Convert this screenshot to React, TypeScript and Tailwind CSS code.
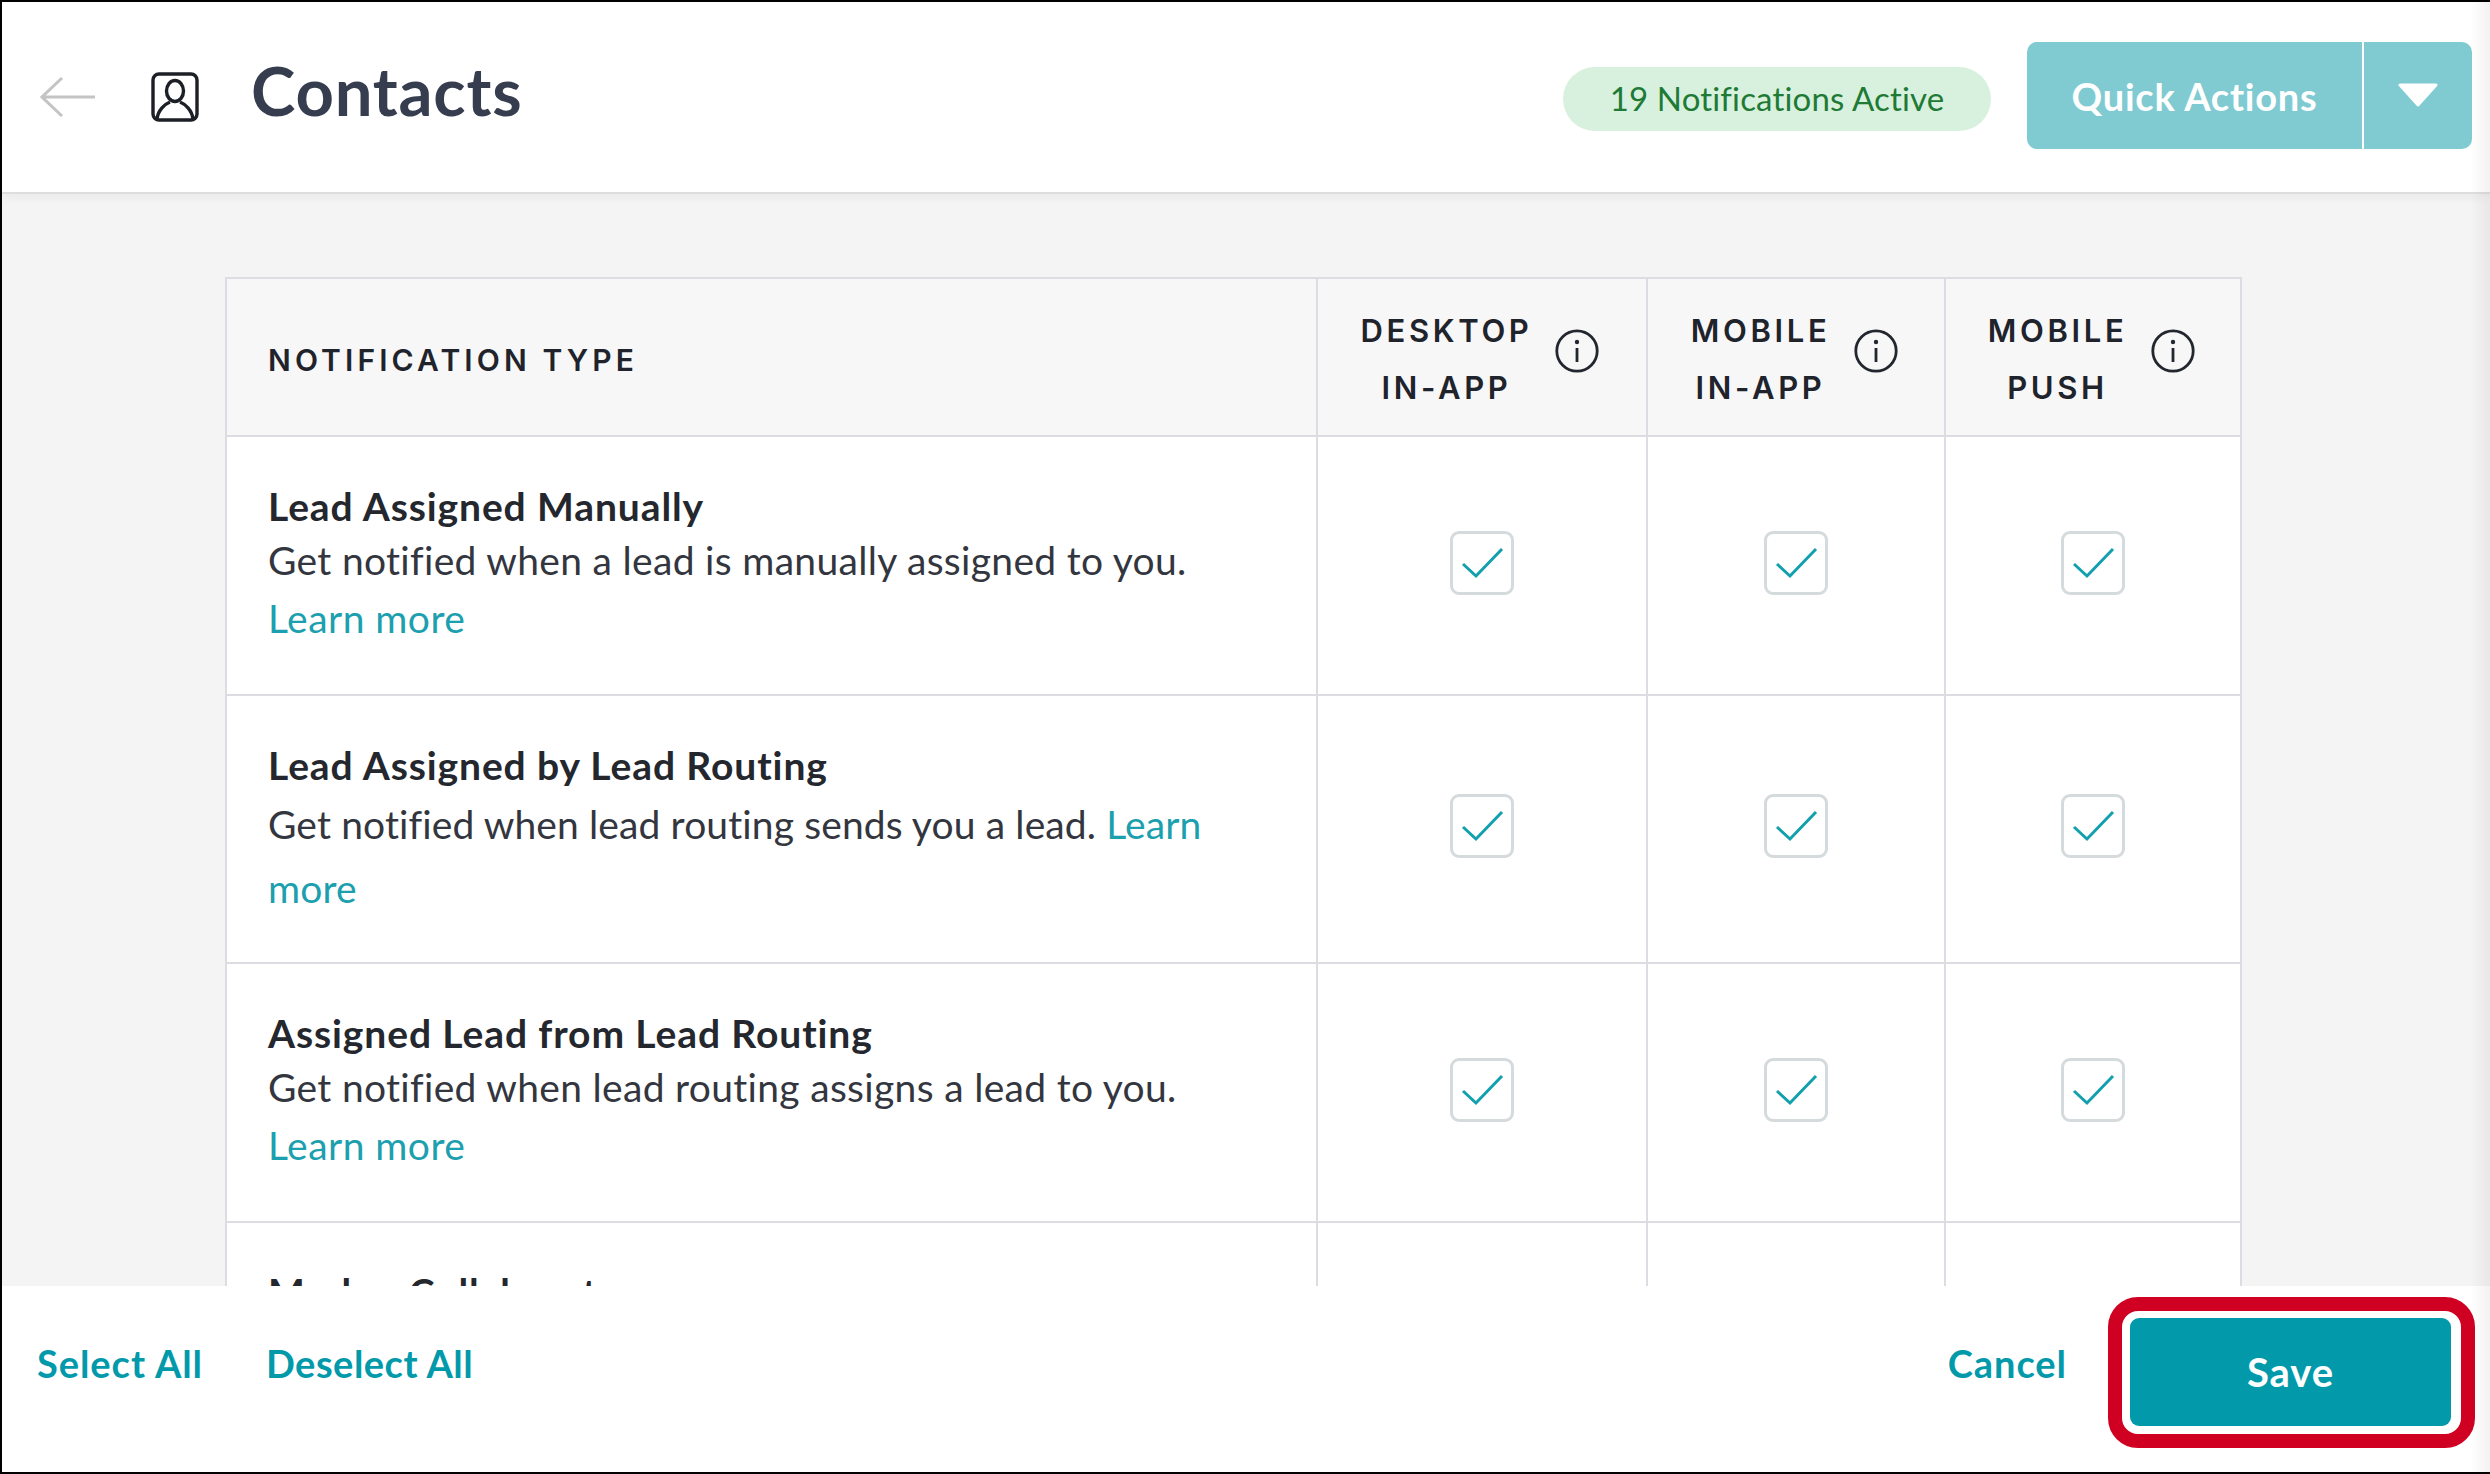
const font = "font-['Lato','Liberation_Sans',sans-serif]";

const rows = [
  { title: "Lead Assigned Manually", desc: "Get notified when a lead is manually assigned to you.", inline: false, h: "h-[259px]" },
  { title: "Lead Assigned by Lead Routing", desc: "Get notified when lead routing sends you a lead.", inline: true, h: "h-[268px]" },
  { title: "Assigned Lead from Lead Routing", desc: "Get notified when lead routing assigns a lead to you.", inline: false, h: "h-[259px]" },
  { title: "Marker Collaborator", desc: "", inline: false, h: "h-[259px]" },
];

const grid = "grid grid-cols-[1089px_330px_298px_296px]";

function InfoIcon() {
  return (
    <svg viewBox="0 0 44 44" className="h-11 w-11 shrink-0" fill="none">
      <circle cx="22" cy="22" r="20.2" stroke="#22262e" strokeWidth="2.8" />
      <circle cx="22" cy="13" r="2.2" fill="#22262e" />
      <path d="M22 19v14" stroke="#22262e" strokeWidth="2.8" />
    </svg>
  );
}

function Check() {
  return (
    <div className="flex h-16 w-16 items-center justify-center rounded-[9px] border-[3px] border-[#d5dadd] bg-white">
      <svg viewBox="0 0 58 58" className="h-[58px] w-[58px]" fill="none">
        <path d="M10 30l13 12 26-27" stroke="#129fae" strokeWidth="3" />
      </svg>
    </div>
  );
}

function HeadCell({ a, b, w }: { a: string; b: string; w: string }) {
  return (
    <div className="flex items-center justify-center gap-6 border-l-2 border-[#dcdce2] pr-[3px]">
      <div className={`${w} mt-1 flex flex-col items-center text-[31px] leading-[57px] font-semibold tracking-[0.118em] text-[#1f232c] font-['Inter','Lato',sans-serif]`}>
        <div className="whitespace-nowrap">{a}</div>
        <div className="whitespace-nowrap">{b}</div>
      </div>
      <div className="-mt-3">
        <InfoIcon />
      </div>
    </div>
  );
}

export default function App() {
  return (
    <div className={`${font} relative flex h-[1474px] w-[2490px] flex-col overflow-hidden border-y-2 border-l-2 border-black bg-white`}>
      <header className="z-10 flex h-[192px] shrink-0 items-center border-b-2 border-[#dedede] bg-white pr-[18px] pl-[38px] shadow-[0_3px_10px_rgba(0,0,0,0.05)]">
        <svg viewBox="0 0 56 40" className="h-10 w-14" fill="none">
          <path d="M55 20H2M22 1L2 20l20 19" stroke="#c4c4c4" strokeWidth="3" />
        </svg>
        <svg viewBox="0 0 48 50" className="ml-[55px] h-[50px] w-12" fill="none">
          <rect x="2" y="2" width="44" height="46" rx="6" stroke="#1c1f26" strokeWidth="3.4" />
          <ellipse cx="24" cy="19" rx="8.5" ry="10.5" stroke="#1c1f26" strokeWidth="3.4" />
          <path d="M6 47c1-9 8-15 13-17M42 47c-1-9-8-15-13-17" stroke="#1c1f26" strokeWidth="3.4" />
        </svg>
        <h1 className="ml-[52px] -mt-[14px] text-[67px] leading-none font-bold tracking-[0.012em] text-[#363d4e]">Contacts</h1>
        <div className="mt-[4px] mr-9 ml-auto flex h-16 w-[428px] items-center justify-center rounded-full bg-[#d8f1de] text-[33px] tracking-[0.005em] text-[#1e7a35]">
          19 Notifications Active
        </div>
        <div className="-mt-[4px] flex h-[107px] w-[445px] rounded-[10px] bg-[#80cbd2] text-white">
          <div className="flex w-[337px] items-center justify-center border-r-2 border-white pt-[2px] text-[38px] font-bold tracking-[0.02em]">Quick Actions</div>
          <div className="flex flex-1 items-center justify-center">
            <svg viewBox="0 0 42 24" className="h-6 w-[42px]">
              <path d="M3 2h36L21 22z" fill="#fff" stroke="#fff" strokeWidth="3" strokeLinejoin="round" />
            </svg>
          </div>
        </div>
      </header>

      <main className="min-h-0 flex-1 overflow-hidden bg-[#f4f4f4] pt-[83px] pl-[223px]">
        <div className="w-[2017px] border-2 border-[#dcdce2] bg-white">
          <div className={`${grid} h-[158px] border-b-2 border-[#dcdce2] bg-[#f7f7f7]`}>
            <div className="flex items-center pt-[6px] pl-[41px] text-[30px] font-semibold tracking-[0.137em] text-[#1f232c] font-['Inter','Lato',sans-serif]">
              NOTIFICATION TYPE
            </div>
            <HeadCell a="DESKTOP" b="IN-APP" w="w-[168px]" />
            <HeadCell a="MOBILE" b="IN-APP" w="w-[139px]" />
            <HeadCell a="MOBILE" b="PUSH" w="w-[139px]" />
          </div>
          {rows.map((r) => (
            <div key={r.title} className={`${grid} ${r.h} border-b-2 border-[#dcdce2]`}>
              <div className="pt-[42px] pr-[43px] pl-[41px]">
                <div className="text-[39px] leading-[54px] font-bold tracking-[0.023em] text-[#24272e]">{r.title}</div>
                {r.inline ? (
                  <div className="text-[39px] leading-[64px] tracking-[0.003em] text-[#33363e]">
                    {r.desc} <span className="text-[#1c9fae]">Learn more</span>
                  </div>
                ) : r.desc ? (
                  <>
                    <div className="text-[39px] leading-[54px] tracking-[0.008em] text-[#33363e]">{r.desc}</div>
                    <div className="mt-1 text-[39px] leading-[54px] tracking-[0.012em] text-[#1c9fae]">Learn more</div>
                  </>
                ) : null}
              </div>
              {[0, 1, 2].map((i) => (
                <div key={i} className="flex items-center justify-center border-l-2 border-[#dcdce2] pb-[6px]">
                  {r.desc ? <Check /> : null}
                </div>
              ))}
            </div>
          ))}
        </div>
      </main>

      <footer className="z-10 flex h-[186px] shrink-0 items-start bg-white pr-[39px] pl-[35px] text-[38px] font-bold tracking-[0.025em] text-[#029aab]">
        <div className="mt-[49px] flex gap-[63px] leading-[56px]">
          <span>Select All</span>
          <span className="tracking-[0.013em]">Deselect All</span>
        </div>
        <div className="ml-auto flex items-start">
          <span className="mt-[49px] mr-[63px] leading-[56px]">Cancel</span>
          <div className="relative mt-[32px] flex h-[108px] w-[321px] items-center justify-center rounded-[9px] bg-[#029aab] text-[40px] text-white">
            Save
            <div className="absolute -top-[21px] -right-[24px] -bottom-[22px] -left-[22px] rounded-[30px] border-[14px] border-[#cf0022]" />
          </div>
        </div>
      </footer>

      <div className="pointer-events-none absolute top-0 right-0 bottom-0 z-20 w-5 bg-linear-to-r from-transparent to-black/5" />
    </div>
  );
}
